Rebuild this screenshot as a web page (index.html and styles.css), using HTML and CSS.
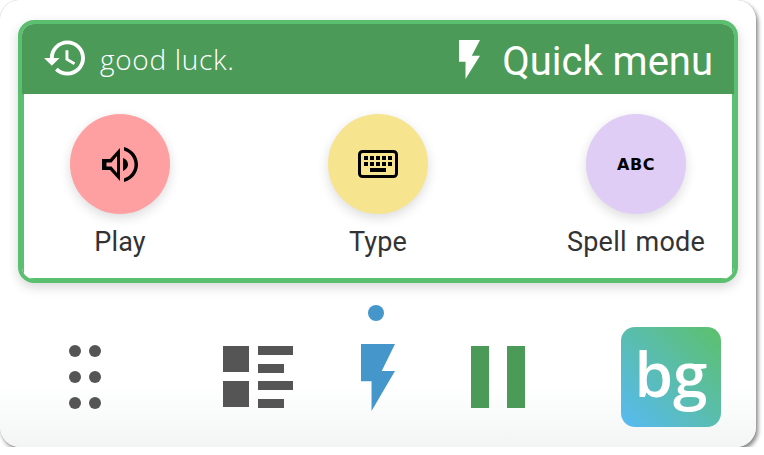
FILE: index.html
```html
<!DOCTYPE html>
<html lang="en">

<head>
  <meta charset="UTF-8">
  <title>Quick menu</title>
  <link rel="stylesheet" href="styles.css">
</head>

<body>
  <div class="card">
    <div class="panel">
      <div class="head">
        <div class="head-left">
          <svg class="ico-history" viewBox="1 3 21 18" fill="#fff">
            <path d="M13 3c-4.97 0-9 4.03-9 9H1l3.89 3.89.07.14L9 12H6c0-3.87 3.13-7 7-7s7 3.13 7 7-3.13 7-7 7c-1.93 0-3.68-.79-4.94-2.06l-1.42 1.42C8.27 19.99 10.51 21 13 21c4.97 0 9-4.03 9-9s-4.03-9-9-9zm-1 5v5l4.28 2.54.72-1.21-3.5-2.08V8H12z"/>
          </svg>
          <span class="luck">good luck.</span>
        </div>
        <div class="head-right">
          <svg class="ico-bolt-white" viewBox="0 0 100 198" preserveAspectRatio="none" fill="#fff">
            <polygon points="0,0 100,0 61,80 100,80 31,198 31,110 0,110"/>
          </svg>
          <span class="title">Quick menu</span>
        </div>
      </div>
      <div class="modes">
        <div class="mode">
          <div class="circle pink">
            <svg width="36" height="35" viewBox="0 0 36 35">
              <path fill-rule="evenodd" d="M0 12H8L18 1V34L8 23H0ZM4.500 15.500V19.500H9.500L15 26V9L9.500 15.500Z"/>
              <path d="M21 11C24 12 26 14.500 26 17.500C26 20.500 24 22.500 21 24Z"/>
              <path d="M22 0C30 2 36 9 36 17.500C36 26 30 33 22 35V31.500C28 29.500 32.500 24 32.500 17.500C32.500 11 28 5.500 22 3.500Z"/>
            </svg>
          </div>
          <div class="label">Play</div>
        </div>
        <div class="mode">
          <div class="circle yellow">
            <svg width="40" height="28" viewBox="0 0 40 28">
              <rect x="1.500" y="1.500" width="37" height="25" rx="3" fill="none" stroke="#000" stroke-width="3"/>
              <g>
                <rect x="6" y="6" width="4" height="4"/><rect x="12" y="6" width="4" height="4"/><rect x="18" y="6" width="4" height="4"/><rect x="24" y="6" width="4" height="4"/><rect x="30" y="6" width="4" height="4"/>
                <rect x="6" y="12" width="4" height="4"/><rect x="12" y="12" width="4" height="4"/><rect x="18" y="12" width="4" height="4"/><rect x="24" y="12" width="4" height="4"/><rect x="30" y="12" width="4" height="4"/>
                <rect x="12" y="18" width="16" height="4"/>
              </g>
            </svg>
          </div>
          <div class="label">Type</div>
        </div>
        <div class="mode">
          <div class="circle lilac"><span class="abc">ABC</span></div>
          <div class="label">Spell mode</div>
        </div>
      </div>
    </div>

    <div class="bottom">
      <div class="slot">
        <svg width="32" height="64" viewBox="0 0 32 64" fill="#555">
          <circle cx="6" cy="6" r="6"/><circle cx="26" cy="6" r="6"/>
          <circle cx="6" cy="32" r="6"/><circle cx="26" cy="32" r="6"/>
          <circle cx="6" cy="58" r="6"/><circle cx="26" cy="58" r="6"/>
        </svg>
      </div>
      <div class="mid">
        <div class="slot">
          <svg width="70" height="62" viewBox="0 0 70 62" fill="#555">
            <rect width="26" height="26"/><rect y="35" width="26" height="26"/>
            <rect x="35" width="35" height="9"/><rect x="35" y="18" width="26" height="9"/>
            <rect x="35" y="35" width="35" height="9"/><rect x="35" y="53" width="26" height="9"/>
          </svg>
        </div>
        <div class="slot current">
          <span class="dot"></span>
          <svg width="34" height="67" viewBox="0 0 100 198" preserveAspectRatio="none" fill="#4597cb">
            <polygon points="0,0 100,0 61,80 100,80 31,198 31,110 0,110"/>
          </svg>
        </div>
        <div class="slot">
          <div class="pause"><span></span><span></span></div>
        </div>
      </div>
      <div class="logo">bg</div>
    </div>
  </div>
</body>

</html>
```

FILE: styles.css
```css
html, body {
  margin: 0;
  background-color: #fff;
}

.card {
  width: 756px;
  height: 447px;
  padding-top: 20px;
  box-sizing: border-box;
  border-radius: 20px;
  background: linear-gradient(#fff 385px, #f3f5f5 100%);
  box-shadow: 0 0 1px #888, 2px 3px 4px #888;
  overflow: hidden;
}

.panel {
  width: 720px;
  height: 263px;
  margin-left: 18px;
  box-sizing: border-box;
  background-color: #fff;
  border: 4px solid #5ac06f;
  border-radius: 16px;
  box-shadow: 0 4px 12px rgba(0, 0, 0, 0.16);
  overflow: hidden;
}

.head {
  height: 70px;
  padding: 0 21px 0 23px;
  display: flex;
  justify-content: space-between;
  align-items: center;
  background-color: #4b9a57;
  color: #fff;
}

.head-left, .head-right {
  display: flex;
  align-items: center;
}

.ico-history {
  width: 41px;
  height: 36px;
  margin-top: -2px;
  margin-left: -1px;
}

.luck {
  margin-left: 15px;
  font-family: "Open Sans", sans-serif;
  font-weight: 300;
  font-size: 28px;
  letter-spacing: 0.7px;
}

.ico-bolt-white {
  width: 21px;
  height: 39px;
  margin-right: 22px;
}

.title {
  margin-top: 4px;
  font-family: Roboto, sans-serif;
  font-size: 40px;
}

.modes {
  height: 185px;
  box-sizing: border-box;
  display: flex;
  justify-content: space-between;
  padding: 20px 26px 0;
  border: 2px solid #5ac06f;
  border-width: 0 2px 1px;
}

.mode {
  width: 140px;
  display: flex;
  flex-direction: column;
  align-items: center;
}

.circle {
  width: 100px;
  height: 100px;
  border-radius: 50%;
  display: flex;
  align-items: center;
  justify-content: center;
  box-shadow: 0 4px 12px rgba(0, 0, 0, 0.14);
}

.pink { background-color: #fe9fa1; }
.yellow { background-color: #f7e48f; }
.lilac { background-color: #dfcdf6; }

.abc {
  font-family: "DejaVu Sans", sans-serif;
  font-weight: bold;
  font-size: 16px;
  letter-spacing: 0.5px;
  color: #000;
}

.label {
  margin-top: 11px;
  font-family: Roboto, sans-serif;
  font-size: 27px;
  letter-spacing: 0.2px;
  word-spacing: 2px;
  line-height: 34px;
  color: #333;
  white-space: nowrap;
}

.bottom {
  display: flex;
  justify-content: space-between;
  align-items: center;
  margin-top: 44px;
  padding: 0 35px;
}

.mid {
  display: flex;
  gap: 20px;
}

.slot {
  width: 100px;
  height: 100px;
  display: flex;
  align-items: center;
  justify-content: center;
}

.current {
  position: relative;
}

.dot {
  position: absolute;
  left: 40px;
  top: -22px;
  width: 16px;
  height: 16px;
  border-radius: 50%;
  background-color: #4597cb;
}

.pause {
  display: flex;
  gap: 18px;
}

.pause span {
  width: 18px;
  height: 62px;
  background-color: #4b9a57;
}

.logo {
  width: 100px;
  height: 100px;
  border-radius: 14px;
  background: linear-gradient(45deg, #57baf3, #5cc06b);
  color: #fff;
  font-family: "Open Sans", sans-serif;
  font-weight: 600;
  font-size: 62px;
  line-height: 92px;
  text-align: center;
}
```
